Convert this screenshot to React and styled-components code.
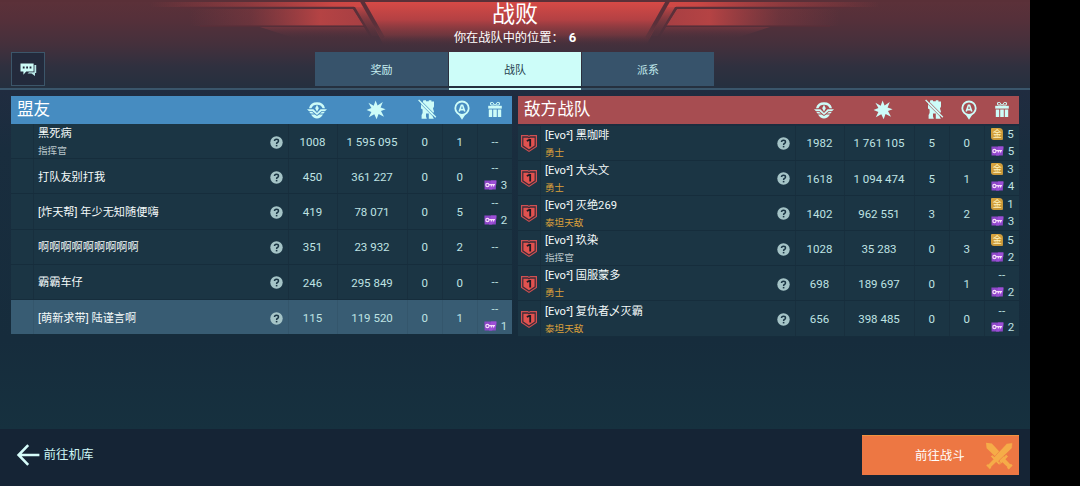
import styled, { createGlobalStyle } from 'styled-components';

const GlobalStyle = createGlobalStyle`
    * {
        box-sizing: border-box;
    }
    body {
        margin: 0;
        background: #000;
        font-family: Roboto, 'Noto Sans CJK SC', sans-serif;
        color: #e3f1f1;
    }
`

const Screen = styled.div`
    width: 1030px;
    height: 486px;
    display: flex;
    flex-direction: column;
    background: linear-gradient(#202c40 90px, #192d3e 150px, #162c3c 340px, #16313f 430px);
    overflow: hidden;
`

const Header = styled.header`
    position: relative;
    height: 90px;
    flex: none;
    display: flex;
    flex-direction: column;
    align-items: center;
    background: linear-gradient(#5c3139, #55303a 20px, #45303c 44px, #30303f 66px, #25303f 88px, #3a566b 88px);
`

const Art = styled.svg`
    position: absolute;
    left: 0;
    top: 0;
`

const Title = styled.h1`
    position: relative;
    flex: none;
    margin: 0;
    height: 28px;
    font-size: 23px;
    line-height: 29px;
    font-weight: 400;
    color: #fff;
`

const Subtitle = styled.div`
    position: relative;
    flex: none;
    height: 24px;
    font-size: 12.2px;
    line-height: 20px;
    color: #fff;

    b {
        margin-left: 2px;
        font-size: 13px;
    }
`

const HeaderBar = styled.div`
    position: relative;
    flex: none;
    width: 100%;
    height: 38px;
    display: flex;
    padding-left: 11px;
`

const ChatButton = styled.button`
    width: 34px;
    height: 34px;
    margin-right: 270px;
    padding: 2px 0 0 1px;
    display: flex;
    align-items: center;
    justify-content: center;
    border: 1px solid #3c566a;
    background: #232a3c;
`

const Tab = styled.div`
    width: ${props => props.$width}px;
    height: ${props => props.$active ? 38 : 34}px;
    padding-bottom: ${props => props.$active ? 5 : 1}px;
    margin-right: 1px;
    display: flex;
    align-items: center;
    justify-content: center;
    font-size: 11px;
    color: ${props => props.$active ? '#26414f' : '#c5eef0'};
    background: ${props => props.$active
        ? 'linear-gradient(#cdfdf9 34px, #25303f 34px, #25303f 36px, #cdfdf9 36px)'
        : '#37536b'};
`

const Boards = styled.main`
    flex: 1;
    display: flex;
    align-items: flex-start;
    gap: 6px;
    padding: 6px 11px 0;
`

const Board = styled.section`
    width: 501px;
`

const BoardHead = styled.div`
    height: 27.5px;
    margin-bottom: ${props => props.$enemy ? 2 : 0.5}px;
    padding-left: 6px;
    display: grid;
    grid-template-columns: 1fr 49px 69px 34px 34px 33.5px;
    align-items: center;
    justify-items: center;
    color: #cdfcf8;
    background: ${props => props.$enemy ? '#a74d51' : '#468cc1'};

    h2 {
        justify-self: start;
        margin: 0;
        font-size: 16.6px;
        line-height: 26px;
        font-weight: 400;
        color: #fff;
    }
    svg {
        display: block;
    }
`

const Row = styled.div`
    height: 35.2px;
    display: grid;
    grid-template-columns: 22.5px 255px 49px 70px 35.3px 35px 1fr;
    border-bottom: 1px solid #162d3c;
    font-size: 11.5px;
    color: #bfe3e3;
    background: ${props => props.$own ? '#385c73' : '#1b3544'};
`

const Cell = styled.div`
    height: 34.2px;
    padding-top: 1.6px;
    display: flex;
    align-items: center;
    justify-content: center;
    border-right: 1px solid ${props => props.$own ? '#34566c' : '#182f3e'};
    white-space: nowrap;

    &:last-child {
        padding-top: 0;
        border-right: 0;
    }
`

const PlayerCell = styled(Cell)`
    justify-content: space-between;
    padding: 2px 5px 0 4.5px;
`

const Name = styled.div`
    height: 17px;
    font-size: 11.2px;
    line-height: 17.5px;
    color: #f4fafa;
`

const Rank = styled.div`
    height: 17px;
    font-size: 9.6px;
    line-height: 17px;
    color: ${props => props.$gold ? '#dda03b' : '#b9c6cb'};
`

const Rewards = styled.div`
    width: 100%;
    display: flex;
    flex-direction: column;
    align-items: center;
`

const Reward = styled.div`
    width: 100%;
    height: 17px;
    padding-left: 6.5px;
    display: flex;
    align-items: center;
    gap: 3.5px;
`

const Dash = styled.div`
    height: 17px;
    line-height: 18.5px;
    letter-spacing: 0.3px;
`

const Coin = styled.span`
    width: 12px;
    height: 12px;
    margin-right: 0.5px;
    border-radius: 1px 4px 1px 3px;
    background: linear-gradient(135deg, #dca63d, #c09238);
    color: #fff0b8;
    font-size: 9px;
    line-height: 12px;
    text-align: center;
`

const Footer = styled.footer`
    height: 57px;
    flex: none;
    display: flex;
    justify-content: space-between;
    padding: 6px 11px 0 16px;
    background: #152435;
`

const Back = styled.a`
    height: 40px;
    display: flex;
    align-items: center;
    gap: 2.5px;
    font-size: 12.5px;
    line-height: 16px;
    color: #cdf7f5;
`

const BattleButton = styled.button`
    width: 157.4px;
    height: 40px;
    padding: 0 5px 0 53.4px;
    display: flex;
    align-items: center;
    justify-content: space-between;
    border: 0;
    border-top: 1px solid #f0943f;
    font-family: inherit;
    font-size: 12.4px;
    line-height: 16px;
    color: #fff;
    background: #ed7743;
`

function HeaderArt(){
    return (
        <Art width="1030" height="52" viewBox="0 0 1030 52" fill="none">
            <defs>
                <linearGradient id="glow" x1="0" y1="0" x2="0" y2="1">
                    <stop offset="0" stopColor="#d64a46" />
                    <stop offset="0.4" stopColor="#b94244" stopOpacity="0.95" />
                    <stop offset="0.75" stopColor="#853a40" stopOpacity="0.6" />
                    <stop offset="1" stopColor="#45303c" stopOpacity="0" />
                </linearGradient>
                <linearGradient id="wing" x1="0" y1="0" x2="1" y2="0">
                    <stop offset="0" stopColor="#c64444" stopOpacity="0" />
                    <stop offset="0.45" stopColor="#c64444" stopOpacity="0.45" />
                    <stop offset="0.85" stopColor="#d04845" stopOpacity="0.95" />
                    <stop offset="1" stopColor="#d04845" />
                </linearGradient>
                <linearGradient id="wingLow" x1="0" y1="0" x2="1" y2="0">
                    <stop offset="0" stopColor="#b04144" stopOpacity="0" />
                    <stop offset="0.35" stopColor="#b04144" stopOpacity="0.25" />
                    <stop offset="0.75" stopColor="#bf4545" stopOpacity="0.9" />
                    <stop offset="1" stopColor="#b04144" stopOpacity="0.9" />
                </linearGradient>
                <linearGradient id="slant" x1="0" y1="0" x2="0" y2="1">
                    <stop offset="0" stopColor="#c04545" />
                    <stop offset="1" stopColor="#5a333d" stopOpacity="0.2" />
                </linearGradient>
                <linearGradient id="edge" x1="0" y1="0" x2="0" y2="40" gradientUnits="userSpaceOnUse">
                    <stop offset="0" stopColor="#5c2f38" />
                    <stop offset="0.6" stopColor="#5a303a" />
                    <stop offset="1" stopColor="#48303b" stopOpacity="0.2" />
                </linearGradient>
                <linearGradient id="under" x1="0" y1="0" x2="0" y2="1">
                    <stop offset="0" stopColor="#8c3b42" stopOpacity="0.5" />
                    <stop offset="1" stopColor="#45303c" stopOpacity="0" />
                </linearGradient>
                <g id="side">
                    <path d="M150 2H362L365 7H150Z" fill="url(#wing)" />
                    <path d="M355 7H365L381 36H372Z" fill="url(#slant)" />
                    <path d="M190 9H353L364 26H190Z" fill="url(#wingLow)" />
                    <path d="M260 27H364L372 40H300Z" fill="url(#under)" />
                    <path d="M180 7.7H353.5L373 40" stroke="url(#edge)" strokeWidth="1.8" />
                    <path d="M200 26H364" stroke="#5a303a" strokeOpacity="0.8" strokeWidth="1.4" />
                    <path d="M362 1L383 38" stroke="url(#edge)" strokeWidth="4" />
                </g>
            </defs>
            <path d="M362 2H668L646 46H384Z" fill="url(#glow)" />
            <use href="#side" />
            <use href="#side" transform="translate(1030 0) scale(-1 1)" />
            <path d="M0 1H1030" stroke="#5a3038" strokeWidth="2" />
        </Art>
    );
}

function ChatIcon(){
    return (
        <svg width="17" height="14" viewBox="0 0 17 14">
            <path d="M14.4 2H16.2V10H15V13L11.5 10.6H7.5L9 9.3H14.4Z" fill="#b9e8e8" />
            <path d="M0.5 0.5H13.6V8.4H6.2L3.4 11.8V8.4H0.5Z" fill="#cdfcf8" />
            <path d="M2.8 3.6h1.8v1.8H2.8zM6.2 3.6H8v1.8H6.2zM9.6 3.6h1.8v1.8H9.6z" fill="#232a3c" />
        </svg>
    );
}

function HonorIcon(){
    return (
        <svg width="20" height="18" viewBox="0 0 20 18" fill="currentColor">
            <path d="M2 7.2A8.2 7.6 0 0 1 18 7.2H15.6A6 5.4 0 0 0 4.4 7.2Z" />
            <path d="M10 3.8L11.8 7.2L10 10.8L8.2 7.2Z" />
            <path d="M0 8.2H6.4L10 12L13.6 8.2H20L18.2 9.9H14.7L10 14L5.3 9.9H1.8Z" />
            <path d="M2 10.8H5L7 12.6H3.6Z" />
            <path d="M18 10.8H15L13 12.6H16.4Z" />
            <path d="M4 13.4H7.8L10 15L12.2 13.4H16Q13.6 17.5 10 17.5Q6.4 17.5 4 13.4Z" />
        </svg>
    );
}

function BurstIcon(){
    return (
        <svg width="20" height="20" viewBox="0 0 20 20" fill="currentColor">
            <path d="M9.6 0.6L11.6 5.6L16.8 2.1L14.6 7.4L19.6 9.2L15 11.1L18 16.8L12.6 14L10.6 19.2L8.3 14.2L2.8 17.3L5.4 12L0.6 10L5.4 8L2.4 2.8L7.7 5.8Z" />
        </svg>
    );
}

function RobotIcon({ slash }){
    return (
        <svg width="19" height="21" viewBox="0 0 19 21" fill="currentColor">
            <path d="M5.4 1.2H8V2.2H10.8V1.2H13.4V2.4H16V7.6L15 9.6L16 12.8L14.8 14.4V17.6L15.8 19.8H10.8V14.4H8V17.6L8.8 19.8H3.6V16L4.6 14V10.4L3 9.4V4.4L4.8 3Z" />
            <path d="M1.5 0.3L18.3 17.1" stroke={slash} strokeWidth="0.9" />
            <path d="M0.6 1L17.8 18.2" stroke="currentColor" strokeWidth="1.4" />
            <path d="M0 2.2L16.6 18.8" stroke={slash} strokeWidth="0.7" />
        </svg>
    );
}

function BeaconIcon(){
    return (
        <svg width="16" height="20" viewBox="0 0 16 20" fill="none">
            <path d="M4.4 14.2L8 19.8L11.6 14.2Z" fill="currentColor" />
            <circle cx="8" cy="8.2" r="6.7" stroke="currentColor" strokeWidth="1.8" />
            <path d="M5.2 11.4L7.4 5.2H8.6L10.8 11.4M6.1 9.6H9.9" stroke="currentColor" strokeWidth="1.6" />
        </svg>
    );
}

function GiftIcon(){
    return (
        <svg width="14" height="17" viewBox="0 0 14 17" fill="currentColor">
            <path d="M6.6 4L4.8 1.4L2.4 1.8L2.8 4ZM7.4 4L9.2 1.4L11.6 1.8L11.2 4Z" fill="none" stroke="currentColor" strokeWidth="1" />
            <path d="M0.2 4.8H13.8V7.6H0.2Z" />
            <path d="M0.8 8.6H4.2V16H0.8ZM5.2 8.6H8.8V16H5.2ZM9.8 8.6H13.2V16H9.8Z" />
        </svg>
    );
}

function HelpIcon(){
    return (
        <svg width="13" height="13" viewBox="0 0 13 13">
            <circle cx="6.5" cy="6.5" r="6.2" fill="#a5c4c7" />
            <path d="M4.5 5.1Q4.5 3.3 6.5 3.3Q8.5 3.3 8.5 5Q8.5 6 7.4 6.5Q6.6 6.9 6.6 7.9" fill="none" stroke="#1b3544" strokeWidth="1.5" />
            <path d="M5.8 8.9h1.6v1.5H5.8z" fill="#1b3544" />
        </svg>
    );
}

function ShieldIcon(){
    return (
        <svg width="18" height="19" viewBox="0 0 18 19">
            <path d="M1.6 1.6H7.6L9 2.4L10.4 1.6H16.4V12.4L9 17.4L1.6 12.4Z" fill="#3b2c38" stroke="#cf5052" strokeWidth="1.2" />
            <path d="M3.4 3.8H7.8L9 4.4L10.2 3.8H14.6V11.4L9 15.2L3.4 11.4Z" fill="#e2524f" />
            <path d="M6.8 7L9.2 5.9H10.2V12.6" fill="none" stroke="#1b1c25" strokeWidth="1.8" />
        </svg>
    );
}

function KeyIcon(){
    return (
        <svg width="13" height="10" viewBox="0 0 13 10">
            <path d="M0.4 0.6H12.4L11.8 9.6H0.6Z" fill="#8e47c8" />
            <path d="M7 0.6H12.4L12.1 5L8 9.6H5Z" fill="#9d4fd6" />
            <circle cx="3.4" cy="5" r="1.6" fill="none" stroke="#f5dcfa" strokeWidth="1.2" />
            <path d="M5 4.6H11M7.4 5V6.6M9.5 5V6.6" stroke="#f5dcfa" strokeWidth="1.2" />
        </svg>
    );
}

function ArrowIcon(){
    return (
        <svg width="25" height="22" viewBox="0 0 25 22" fill="none" stroke="#d5fcfa" strokeWidth="2.6">
            <path d="M12.2 1.2L2.6 11L12.2 20.8M2.6 11H23.4" />
        </svg>
    );
}

function SwordsIcon(){
    const sword = 'M21.8 1.4L27.6 0.8L27 6.2L13.6 19L15.6 21L13.8 22.8L11.2 20.2L6.2 25L6.6 25.8L4.8 27.4L1 23.6L2.6 21.8L3.4 22.2L8.2 17.2L5.6 14.6L7.4 12.8L9.4 14.8Z';
    return (
        <svg width="29" height="28" viewBox="0 0 29 28" fill="#f5ac48">
            <path d={sword} transform="translate(28.6 0) scale(-1 1)" />
            <path d={sword} stroke="#ed7743" strokeWidth="0.6" />
        </svg>
    );
}

const allies = [
    { name: '黑死病', rank: '指挥官', stats: ['1008', '1 595 095', 0, 1] },
    { name: '打队友别打我', stats: ['450', '361 227', 0, 0], keys: 3 },
    { name: '[炸天帮] 年少无知随便嗨', stats: ['419', '78 071', 0, 5], keys: 2 },
    { name: '啊啊啊啊啊啊啊啊啊', stats: ['351', '23 932', 0, 2] },
    { name: '霸霸车仔', stats: ['246', '295 849', 0, 0] },
    { name: '[萌新求带] 陆谨言啊', stats: ['115', '119 520', 0, 1], keys: 1, own: true },
];

const enemies = [
    { name: '[Evo²] 黑咖啡', rank: '勇士', stats: ['1982', '1 761 105', 5, 0], gold: 5, keys: 5 },
    { name: '[Evo²] 大头文', rank: '勇士', stats: ['1618', '1 094 474', 5, 1], gold: 3, keys: 4 },
    { name: '[Evo²] 灭绝269', rank: '泰坦天敌', stats: ['1402', '962 551', 3, 2], gold: 1, keys: 3 },
    { name: '[Evo²] 玖染', rank: '指挥官', stats: ['1028', '35 283', 0, 3], gold: 5, keys: 2 },
    { name: '[Evo²] 国服蒙多', rank: '勇士', stats: ['698', '189 697', 0, 1], keys: 2 },
    { name: '[Evo²] 复仇者乄灭霸', rank: '泰坦天敌', stats: ['656', '398 485', 0, 0], keys: 2 },
];

function PlayerRow({ player, enemy }){
    const { name, rank, stats, gold, keys, own } = player;
    return (
        <Row $own={own}>
            <Cell $own={own}>{enemy && <ShieldIcon />}</Cell>
            <PlayerCell $own={own}>
                <div>
                    <Name>{name}</Name>
                    {rank && <Rank $gold={rank !== '指挥官'}>{rank}</Rank>}
                </div>
                <HelpIcon />
            </PlayerCell>
            {stats.map((value, i) => <Cell key={i} $own={own}>{value}</Cell>)}
            <Cell $own={own}>
                <Rewards>
                    {gold ? <Reward><Coin>金</Coin>{gold}</Reward> : <Dash>--</Dash>}
                    {keys && <Reward><KeyIcon />{keys}</Reward>}
                </Rewards>
            </Cell>
        </Row>
    );
}

function TeamBoard({ title, players, enemy }){
    return (
        <Board>
            <BoardHead $enemy={enemy}>
                <h2>{title}</h2>
                <HonorIcon />
                <BurstIcon />
                <RobotIcon slash={enemy ? '#a74d51' : '#468cc1'} />
                <BeaconIcon />
                <GiftIcon />
            </BoardHead>
            {players.map((player) => <PlayerRow key={player.name} player={player} enemy={enemy} />)}
        </Board>
    );
}

function App(){
    return (
        <>
            <GlobalStyle />
            <Screen>
                <Header>
                    <HeaderArt />
                    <Title>战败</Title>
                    <Subtitle>你在战队中的位置： <b>6</b></Subtitle>
                    <HeaderBar>
                        <ChatButton><ChatIcon /></ChatButton>
                        <Tab $width={133}>奖励</Tab>
                        <Tab $width={132} $active>战队</Tab>
                        <Tab $width={132}>派系</Tab>
                    </HeaderBar>
                </Header>
                <Boards>
                    <TeamBoard title="盟友" players={allies} />
                    <TeamBoard title="敌方战队" players={enemies} enemy />
                </Boards>
                <Footer>
                    <Back><ArrowIcon />前往机库</Back>
                    <BattleButton>前往战斗<SwordsIcon /></BattleButton>
                </Footer>
            </Screen>
        </>
    );
}

export default App;
